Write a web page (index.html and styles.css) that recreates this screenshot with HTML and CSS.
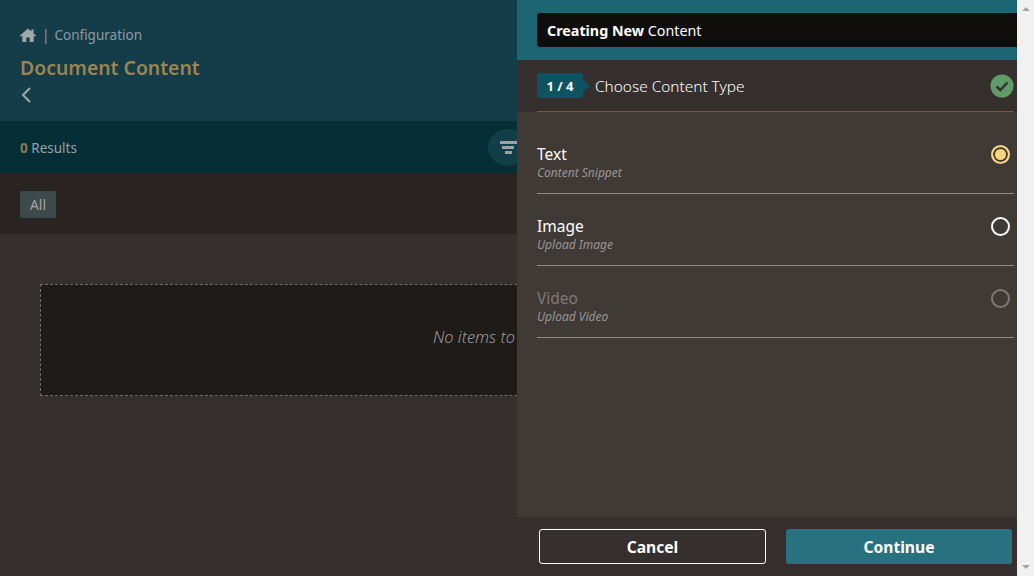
FILE: index.html
```html
<!DOCTYPE html>
<html lang="en">
  <head>
    <meta charset="UTF-8" />
    <meta name="viewport" content="width=device-width, initial-scale=1.0" />
    <title>Document Content</title>
    <link rel="stylesheet" href="styles.css">
  </head>
  <body>
    <div class="app">
      <main class="page">
        <header class="page-head">
          <div class="crumbs">
            <svg class="home-icon" viewBox="0 0 16 14" width="16" height="14">
              <path d="M8 .6 0 7.6 1 8.7 2.3 7.6V14H6.3V9.6H9.7V14H13.700V7.6L15 8.700 16 7.600 13.500 5.400V1.500H11.300V3.500Z" />
            </svg>
            <span class="crumb-sep">|</span>
            <span>Configuration</span>
          </div>
          <h1>Document Content</h1>
          <svg class="back-icon" viewBox="0 0 12 16" width="12" height="16">
            <path d="M10 1 3 8 10 15" />
          </svg>
        </header>

        <div class="results-bar">
          <div class="results-count"><b>0</b> Results</div>
          <button class="filter-btn" type="button" aria-label="Filter">
            <span class="filter-line"></span>
            <span class="filter-line mid"></span>
            <span class="filter-line short"></span>
          </button>
        </div>

        <div class="tabs-bar">
          <span class="tab">All</span>
        </div>

        <div class="content">
          <div class="empty-box">No items to display</div>
        </div>
      </main>

      <div class="scrollbar">
        <span class="arrow-up"></span>
        <span class="arrow-down"></span>
      </div>
    </div>

    <aside class="drawer">
      <div class="drawer-head">
        <div class="drawer-title"><b>Creating New</b> Content</div>
      </div>

      <div class="step">
        <span class="step-badge">1 / 4</span>
        <span class="step-name">Choose Content Type</span>
        <svg class="step-check" viewBox="0 0 24 24" width="24" height="24">
          <circle cx="12" cy="12" r="11.500" />
          <path d="M6.500 12.500 10.300 16 17.500 8.500" />
        </svg>
      </div>

      <div class="drawer-body">
        <div class="option">
          <div>
            <div class="option-name">Text</div>
            <div class="option-sub">Content Snippet</div>
          </div>
          <span class="radio checked"></span>
        </div>
        <div class="option">
          <div>
            <div class="option-name">Image</div>
            <div class="option-sub">Upload Image</div>
          </div>
          <span class="radio"></span>
        </div>
        <div class="option disabled">
          <div>
            <div class="option-name">Video</div>
            <div class="option-sub">Upload Video</div>
          </div>
          <span class="radio"></span>
        </div>
      </div>

      <div class="drawer-foot">
        <button class="btn btn-cancel" type="button">Cancel</button>
        <button class="btn btn-continue" type="button">Continue</button>
      </div>
    </aside>
  </body>
</html>
```

FILE: styles.css
```css
* {
  box-sizing: border-box;
}

html,
body {
  height: 100%;
}

body {
  margin: 0;
  overflow: hidden;
  font-family: "Noto Sans", Arial, sans-serif;
  background-color: #35302d;
}

.app {
  display: flex;
  height: 576px;
}

.page {
  flex: 1;
  display: flex;
  flex-direction: column;
  min-width: 0;
}

.page-head {
  height: 121px;
  padding: 26px 20px 0;
  background-color: #143d49;
}

.crumbs {
  display: flex;
  align-items: center;
  height: 18px;
  font-size: 13.500px;
  color: #8a9ba0;
}

.home-icon {
  fill: #a0a8aa;
}

.crumb-sep {
  margin: 0 5px 0 6px;
  color: #8a9ba0;
}

.page-head h1 {
  margin: 11px 0 0;
  font-size: 19.400px;
  line-height: 26px;
  font-weight: 600;
  color: #9c8450;
}

.back-icon {
  display: block;
  margin-top: 6px;
  fill: none;
  stroke: #a0a8aa;
  stroke-width: 2;
}

.results-bar {
  display: flex;
  align-items: center;
  justify-content: space-between;
  width: 528px;
  height: 52px;
  padding: 0 0 0 20px;
  background-color: #062e36;
}

.results-count {
  padding-top: 2px;
  font-size: 13.500px;
  color: #98a2a4;
}

.results-count b {
  font-weight: 700;
  color: #8d7b4f;
}

.filter-btn {
  display: flex;
  flex-direction: column;
  align-items: center;
  justify-content: center;
  gap: 2px;
  width: 40px;
  height: 37px;
  padding: 0;
  border: none;
  border-radius: 50%;
  background-color: #103f49;
}

.filter-line {
  display: block;
  width: 17px;
  height: 3px;
  background-color: #9aa2a4;
}

.filter-line.mid {
  width: 12px;
}

.filter-line.short {
  width: 7px;
}

.tabs-bar {
  height: 61px;
  padding: 18px 20px 0;
  background-color: #2a2522;
}

.tab {
  display: inline-block;
  width: 36px;
  height: 27px;
  line-height: 27px;
  text-align: center;
  font-size: 14px;
  color: #a3a5a5;
  border-radius: 2px;
  background-color: #3d4a4b;
}

.content {
  flex: 1;
  padding: 50px 40px 0;
}

.empty-box {
  display: flex;
  align-items: center;
  justify-content: center;
  height: 112px;
  padding: 0 15px 8px 0;
  font-size: 16.400px;
  font-weight: 300;
  font-style: italic;
  color: #9a9a98;
  border: 1px dashed #6f6b68;
  background-color: #1f1b18;
}

.scrollbar {
  display: flex;
  flex-direction: column;
  justify-content: space-between;
  align-items: center;
  width: 17px;
  padding: 7px 0;
  background-color: #f1f1f1;
}

.arrow-up {
  border-left: 4px solid transparent;
  border-right: 4px solid transparent;
  border-bottom: 4px solid #a3a3a3;
}

.arrow-down {
  border-left: 4px solid transparent;
  border-right: 4px solid transparent;
  border-top: 4px solid #a3a3a3;
}

/* side panel lies over the page */
.drawer {
  position: absolute;
  top: 0;
  left: 517px;
  display: flex;
  flex-direction: column;
  width: 500px;
  height: 576px;
  background-color: #403a36;
}

.drawer-head {
  height: 60px;
  padding: 13px 0 13px 20px;
  background-color: #1c6674;
}

.drawer-title {
  height: 34px;
  padding-left: 10px;
  line-height: 35px;
  font-size: 14.300px;
  color: #fff;
  border-radius: 3px 0 0 3px;
  background-color: #0f0e0d;
}

.drawer-title b {
  font-weight: 700;
}

.step {
  position: relative;
  display: flex;
  align-items: center;
  height: 52px;
  padding: 0 3px 1px 20px;
  background-color: #35302d;
}

.step::after {
  content: "";
  position: absolute;
  left: 20px;
  right: 3px;
  bottom: 0;
  height: 1px;
  background-color: #7a5a3c;
}

.step-badge {
  position: relative;
  width: 46px;
  height: 25px;
  line-height: 27px;
  text-align: center;
  font-size: 13px;
  font-weight: 700;
  color: #fff;
  border-radius: 3px;
  background-color: #0e5361;
}

.step-badge::after {
  content: "";
  position: absolute;
  top: 7px;
  right: -7px;
  border-top: 6px solid transparent;
  border-bottom: 6px solid transparent;
  border-left: 7px solid #0e5361;
}

.step-name {
  flex: 1;
  margin-left: 12px;
  padding-top: 1px;
  font-size: 15.400px;
  font-weight: 300;
  color: #fff;
}

.step-check circle {
  fill: #5f9c68;
}

.step-check path {
  fill: none;
  stroke: #35302d;
  stroke-width: 2.500;
}

.drawer-body {
  flex: 1;
  padding: 10px 3px 0 20px;
}

.option {
  display: flex;
  align-items: flex-start;
  justify-content: space-between;
  height: 72px;
  padding-top: 21px;
  padding-right: 4px;
  border-bottom: 1px solid #8d8986;
}

.option-name {
  font-size: 15.500px;
  line-height: 22px;
  color: #fff;
}

.option-sub {
  font-size: 12px;
  line-height: 15px;
  font-style: italic;
  color: #9a9693;
}

.option.disabled .option-name {
  color: #7c7977;
}

.radio {
  width: 19px;
  height: 19px;
  margin-top: 2px;
  border: 2px solid #fff;
  border-radius: 50%;
}

.radio.checked {
  border-color: #fdd47c;
  background-color: #fdd47c;
  box-shadow: inset 0 0 0 2px #403a36;
}

.option.disabled .radio {
  border-color: #7c7977;
}

.drawer-foot {
  display: flex;
  gap: 20px;
  height: 59px;
  padding: 12px 5px 0 22px;
  background-color: #35302d;
}

.btn {
  height: 35px;
  padding: 0;
  font-family: inherit;
  font-size: 15.600px;
  font-weight: 700;
  color: #fff;
  border-radius: 3px;
}

.btn-cancel {
  width: 227px;
  border: 1px solid #fff;
  background-color: #35302d;
}

.btn-continue {
  width: 226px;
  border: none;
  background-color: #287280;
}
```
